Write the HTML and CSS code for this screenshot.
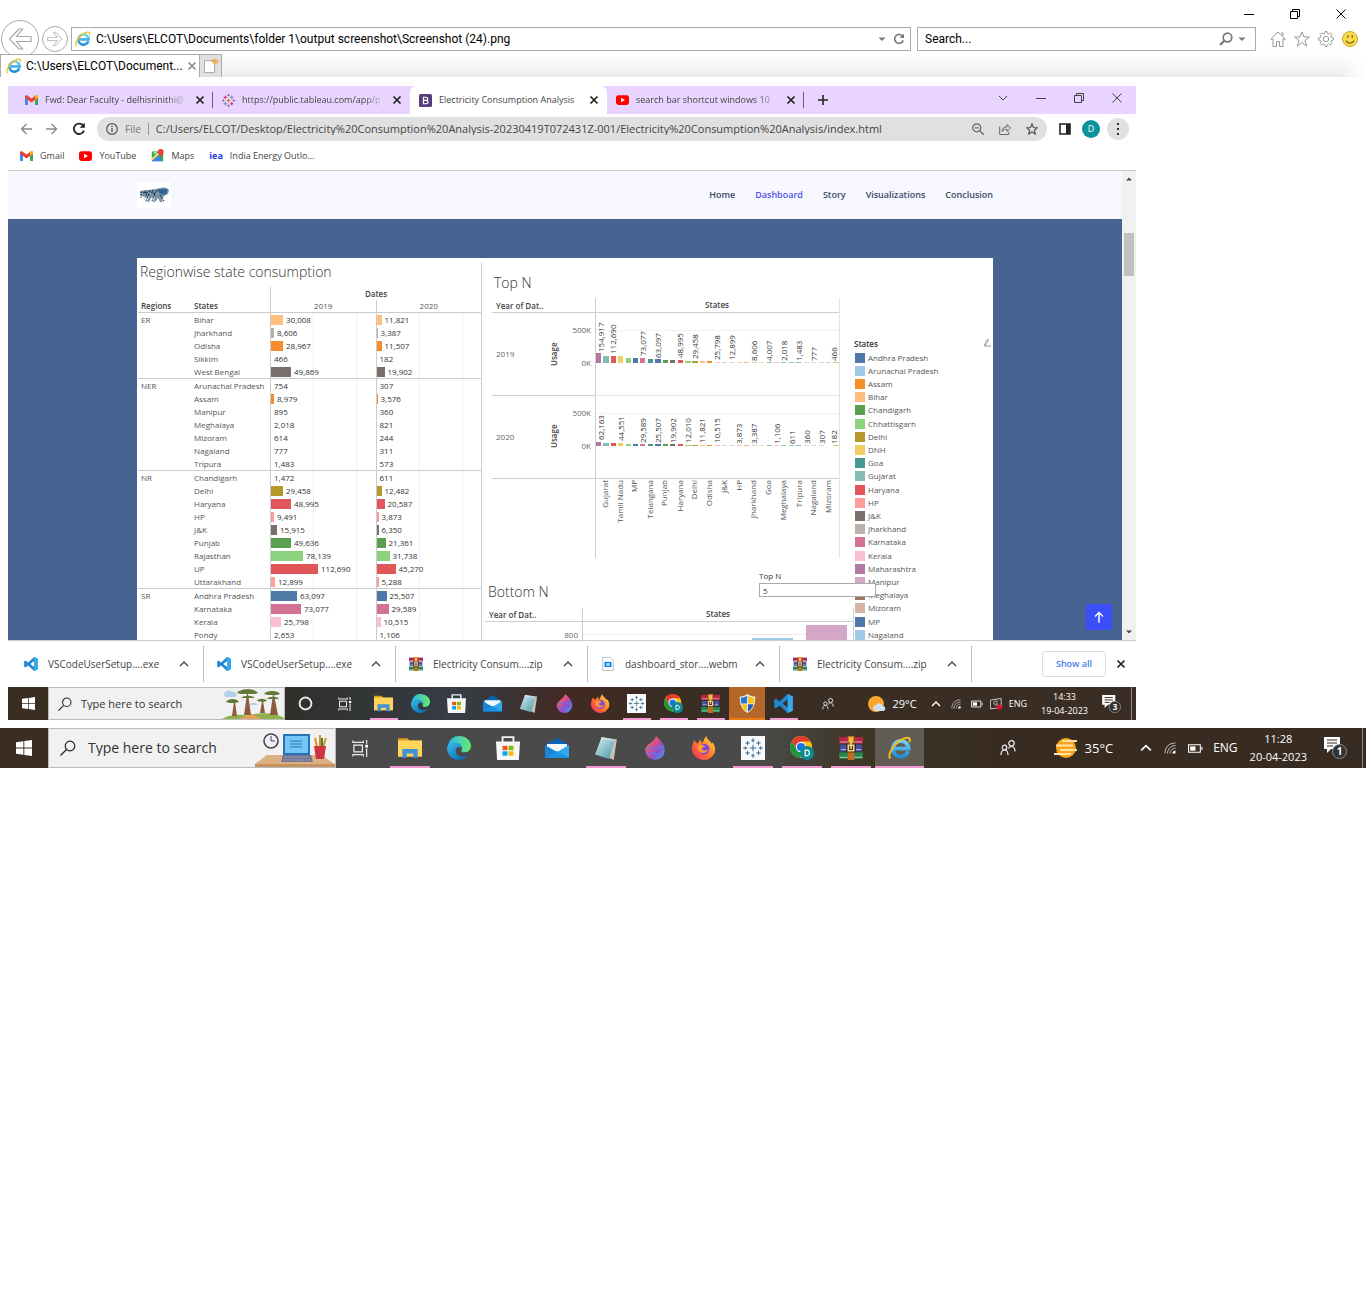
FILE: index.html
```html
<!DOCTYPE html>
<html lang="en">
<head>
<meta charset="utf-8">
<title>Screenshot (24).png</title>
<link rel="stylesheet" href="styles.css">
</head>
<body>
<svg class="defs" width="0" height="0" aria-hidden="true">
  <defs>
    <linearGradient id="gEdge" x1="0" y1="0" x2="1" y2="1"><stop offset="0" stop-color="#35c1f1"/><stop offset="1" stop-color="#0c59a4"/></linearGradient>
    <linearGradient id="gEdge2" x1="0" y1="0" x2="1" y2="0"><stop offset="0" stop-color="#2fb5e8"/><stop offset="1" stop-color="#66eb6e"/></linearGradient>
    <linearGradient id="gDrop" x1="0" y1="0" x2="1" y2="1"><stop offset="0" stop-color="#f5a623"/><stop offset=".35" stop-color="#e34f80"/><stop offset=".65" stop-color="#8c4fd0"/><stop offset="1" stop-color="#35b5f0"/></linearGradient>
    <linearGradient id="gFox" x1="1" y1="0" x2="0" y2="1"><stop offset="0" stop-color="#ffe14a"/><stop offset=".5" stop-color="#ff7a28"/><stop offset="1" stop-color="#f0256a"/></linearGradient>
    <linearGradient id="gPad" x1="0" y1="0" x2="1" y2="1"><stop offset="0" stop-color="#d9f0f3"/><stop offset="1" stop-color="#4795a5"/></linearGradient>
    <linearGradient id="gIe" x1="0" y1="0" x2="0" y2="1"><stop offset="0" stop-color="#6fd4fa"/><stop offset="1" stop-color="#1f8fd6"/></linearGradient>
  </defs>
  <symbol id="ie" viewBox="0 0 16 16"><path d="M13.4 10.3A5.2 5.2 0 1 1 13.7 8.4H4.5" fill="none" stroke="url(#gIe)" stroke-width="2.6"/><path d="M1.6 15C-.8 13 3.500 5.500 9 2.400c3.600-2 6.500-1.800 5.300 1.700" fill="none" stroke="#f2bd1d" stroke-width="1.300"/></symbol>
  <symbol id="gmail" viewBox="0 0 16 12"><path d="M0 1.500V12h3.600V4z" fill="#4285f4"/><path d="M16 1.500V12h-3.600V4z" fill="#34a853"/><path d="M0 1.600C0 .2 1.800-.4 2.900.4L8 4.300 13.100.4C14.200-.4 16 .2 16 1.600V3.200L8 9.100 0 3.200z" fill="#ea4335"/><path d="M12.400.9 13.100.4C14.200-.4 16 .2 16 1.600v1.600l-3.600 2.600z" fill="#fbbc04"/></symbol>
  <symbol id="youtube" viewBox="0 0 16 12"><rect width="16" height="12" rx="3" fill="#f00"/><path d="M6.300 3.200v5.600L11 6z" fill="#fff"/></symbol>
  <symbol id="tableau" viewBox="0 0 16 16"><path d="M8 5.500v5M5.500 8h5" stroke="#e8762d" stroke-width="1.300"/><path d="M4 2v4M2 4h4M12 10v4M10 12h4" stroke="#c72037" stroke-width="1.100"/><path d="M12 2v4M10 4h4M4 10v4M2 12h4" stroke="#5b879b" stroke-width="1.100"/><path d="M8 0v3M6.500 1.500h3M8 13v3M6.500 14.500h3M1.500 6.500v3M0 8h3M14.500 6.500v3M13 8h3" stroke="#5c6692"/></symbol>
  <symbol id="tile" viewBox="0 0 22 22"><path fill="#f8fafb" d="M0 0h22v22H0z"/><path d="M11 8v6M8 11h6M6 4.500v4M4 6.500h4M16 4.500v4M14 6.500h4M6 13.500v4M4 15.500h4M16 13.500v4M14 15.500h4M11 2v4M9.500 4h3M11 16v4M9.500 18h3M4 9.500v3M2 11h4M18 9.500v3M16 11h4" stroke="#38698a" stroke-width=".9"/></symbol>
  <symbol id="bootstrap" viewBox="0 0 16 16"><rect width="16" height="16" rx="2" fill="#563d7c"/><path d="M5.500 4h3.300a1.900 1.900 0 0 1 0 3.800H5.500zm0 3.800H9a2.100 2.100 0 0 1 0 4.200H5.500z" fill="none" stroke="#fff" stroke-width="1.500"/></symbol>
  <symbol id="maps" viewBox="0 0 16 16"><path fill="#34a853" d="M1 3h14v12H1z"/><path fill="#4285f4" d="M1 15 9 8l5 7z"/><path d="M1 13 12 3" stroke="#fdd663" stroke-width="2.500"/><path fill="#ea4335" d="M12 0a3.600 3.600 0 0 0-3.600 3.600C8.400 6 11 7 12 10c1-3 3.600-4 3.600-6.400A3.600 3.600 0 0 0 12 0z"/><path d="m3 5 3-1v3" stroke="#fff" fill="none"/></symbol>
  <symbol id="x" viewBox="0 0 10 10"><path d="m1.500 1.500 7 7m0-7-7 7" stroke="currentColor" stroke-width="1.700"/></symbol>
  <symbol id="thinx" viewBox="0 0 10 10"><path d="m.5.5 9 9m0-9-9 9" stroke="currentColor"/></symbol>
  <symbol id="restore" viewBox="0 0 10 10"><path d="M.5 2.500h7v7h-7zM2.500 2V.5h7v7H8" fill="none" stroke="currentColor"/></symbol>
  <symbol id="min" viewBox="0 0 10 10"><path d="M0 5.500h10" stroke="currentColor"/></symbol>
  <symbol id="up" viewBox="0 0 10 10"><path d="m1 7 4-4 4 4" fill="none" stroke="currentColor" stroke-width="1.400"/></symbol>
  <symbol id="down" viewBox="0 0 10 10"><path d="m1 3 4 4 4-4" fill="none" stroke="currentColor"/></symbol>
  <symbol id="caret" viewBox="0 0 8 8"><path d="M.5 2.500h7L4 6z" fill="currentColor"/></symbol>
  <symbol id="reload" viewBox="0 0 14 14"><path d="M11.500 4A5.200 5.200 0 1 0 12 8.600" fill="none" stroke="currentColor" stroke-width="1.800"/><path d="M12.800.8v5H7.600z" fill="currentColor"/></symbol>
  <symbol id="arrow" viewBox="0 0 12 12"><path d="M12 6H1.500m5-5-5 5 5 5" fill="none" stroke="currentColor" stroke-width="1.400"/></symbol>
  <symbol id="outarrow" viewBox="0 0 24 24"><path d="m11 2-9.500 10L11 22h3.500l-6-7.500H23v-5H8.500l6-7.500z" fill="none" stroke="currentColor" stroke-width="1.200"/></symbol>
  <symbol id="search" viewBox="0 0 16 16"><circle cx="10" cy="6" r="4.800" fill="none" stroke="currentColor" stroke-width="1.200"/><path d="m6.500 9.500-6 6" stroke="currentColor" stroke-width="1.200"/></symbol>
  <symbol id="lensbold" viewBox="0 0 14 14"><circle cx="8.500" cy="5.500" r="4.300" fill="none" stroke="currentColor" stroke-width="1.700"/><path d="M5.500 8.500 1 13" stroke="currentColor" stroke-width="2.200"/></symbol>
  <symbol id="vscode" viewBox="0 0 16 16"><path d="m11.500 0 4.300 2v12l-4.300 2L4.700 9.700 1.600 12 .2 11.200V4.800L1.600 4l3.100 2.300zM11.600 4.500 7.200 8l4.400 3.500z" fill="#1f8ad2" fill-rule="evenodd"/><path d="m11.500 0 4.300 2v12l-4.300 2z" fill="#39a9ee"/></symbol>
  <symbol id="rar" viewBox="0 0 22 22"><path fill="#b22344" d="M0 1h22v6H0z"/><path fill="#4650b0" d="M1 8h20v6H1z"/><path fill="#23854c" d="M0 15h22v6H0z"/><path stroke="#e8dfe8" stroke-width=".7" d="M1 5.500h20M2 12.500h18M1 19.500h20"/><path fill="#c06a1f" d="M8 0h6v22H8z"/><path fill="#f0c040" d="M9 1h4v5H9z"/><path fill="#3b2417" d="M6.500 7h9v8h-9z"/><path fill="none" stroke="#f4d590" stroke-width="1.500" d="M8.500 8.500h5v5h-5zM11 6v6"/></symbol>
  <symbol id="media" viewBox="0 0 14 16"><path d="M1 .5h9L13 4v11.500H1z" fill="#fff" stroke="#a9b8c6"/><path fill="#1683d8" d="M3 5.500h8v6H3z"/><path fill="#9fe3ff" d="M5 7h4v3H5z"/></symbol>
  <symbol id="win" viewBox="0 0 16 16"><path fill="#fff" d="M0 2.300 7.400 1.300v6.300H0zM8.300 1.100 16 0v7.600H8.300zM0 8.500h7.400v6.300L0 13.700zM8.300 8.500H16V16L8.300 14.900z"/></symbol>
  <symbol id="task" viewBox="0 0 18 18"><path d="M2 5.500h9v7H2zM1 .5v2h11v-2M1 17.500v-2h11v2M15.500 0v4M15.500 9v9" fill="none" stroke="#eee" stroke-width="1.300"/><path fill="#fff" d="M14 5h3v3h-3z"/></symbol>
  <symbol id="folder" viewBox="0 0 22 20"><path fill="#d99a13" d="M0 1h9l2 3H0z"/><path fill="#ffd45b" d="M0 3h22v15H0z"/><path fill="#3c92d4" d="M4 11h14v8h-4v-4H8v4H4z"/></symbol>
  <symbol id="edge" viewBox="0 0 22 22"><path d="M1 9C2 3 6 0 11 0c6.500 0 11 4.500 11 9 0 4-3 6-6 6-2 0-3.500-1-2.500-2.500 1-2 0-5-4-5C5 7.500 1.500 10 1 9z" fill="url(#gEdge2)"/><path d="M0 11c.5-4 4-5.500 8-5 4 .4 6 3.500 5 5.500-2-3-5.500-1-5 2.500.5 4 5 6 11 3.500C16.500 21 14 22 11 22 5 22 0 17 0 11z" fill="url(#gEdge)"/></symbol>
  <symbol id="store" viewBox="0 0 22 22"><path d="M6 6V1h10v5" fill="none" stroke="#f2f2f2" stroke-width="1.700"/><path fill="#f7f7f7" d="M0 5h22l-1 17H1z"/><path fill="#f25022" d="M6 9h4.500v4H6z"/><path fill="#7fba00" d="M11.500 9H16v4h-4.500z"/><path fill="#00a4ef" d="M6 14h4.500v4H6z"/><path fill="#ffb900" d="M11.500 14H16v4h-4.500z"/></symbol>
  <symbol id="mail" viewBox="0 0 24 20"><path fill="#0a62b3" d="m0 7 12-7 12 7v13H0z"/><path fill="#f3f8fc" d="M2 6h20v6l-10 5L2 12z"/><path fill="#1685d9" d="m0 7 12 7-12 6z"/><path fill="#31a9ef" d="m24 7-12 7 12 6z"/><path fill="#1b93e4" d="m0 20 12-7 12 7z"/></symbol>
  <symbol id="pad" viewBox="0 0 22 22"><path fill="#c9c2b4" d="m8 2 13 1-3 19-4-2z"/><path d="m7 1 12 2-5 18L1 17z" fill="url(#gPad)"/><path d="m7 2 11 2" stroke="#e8e8e8" stroke-width="2" stroke-dasharray="1 1"/></symbol>
  <symbol id="drop" viewBox="0 0 18 22"><path d="M10 0c4 4 8 8 8 13a9 9 0 0 1-18 0C0 8 8 6 10 0z" fill="url(#gDrop)"/><path d="M1 12c5-5 10 3 16-3M1 16c5-4 10 4 15 0" stroke="#5e7be8" stroke-width="2" fill="none" opacity=".6"/></symbol>
  <symbol id="fox" viewBox="0 0 22 22"><path d="M2 4l3 3 3-4 1 4c2-2 2-5 4-7 1 4 4 4 5 7l1-1c2 3 3 6 1.500 10C18 20 15 22 11 22 5 22 0 17.500 0 12 0 9 1 6 2 4z" fill="url(#gFox)"/><circle cx="11" cy="12" r="5" fill="#7d46d6"/><path d="M5 9c3-2 6-1 7 1-2 0-3 1-3 2 1 2 4 2 6 0-1 5-9 5-10-1z" fill="#ff9a2e"/></symbol>
  <symbol id="chrome" viewBox="0 0 24 24"><circle cx="11" cy="11" r="11" fill="#fbc116"/><path d="M1.500 5.500A11 11 0 0 1 20.500 5.500H11L7 13z" fill="#e33b2e"/><path d="M1.500 5.500A11 11 0 0 0 10 22l5-8.500H7z" fill="#229342"/><circle cx="11" cy="11" r="5.200" fill="#fff"/><circle cx="11" cy="11" r="4.100" fill="#1a73e8"/><circle cx="17" cy="17" r="7" fill="#0b8a94"/><path d="M15.200 14.200h1.300c4 0 4 5.600 0 5.600h-1.300z" fill="none" stroke="#fff" stroke-width="1.200"/></symbol>
  <symbol id="shield" viewBox="0 0 18 22"><path d="M9 0c3 2 6 3 9 3 0 9-2 15-9 19C2 18 0 12 0 3c3 0 6-1 9-3z" fill="#f2f2f2"/><path fill="#2b74d6" d="M8.500 2v9H2C1.300 9 1.200 7 1.200 4.300 4 4 6.500 3.300 8.500 2z"/><path fill="#f8c21c" d="M9.500 2c2 1.300 4.500 2 7.300 2.300 0 2.700-.1 4.700-.8 6.700H9.500zM8.500 12v8.500C5 18.500 3 15.500 2.200 12z"/><path fill="#1f5fba" d="M9.500 12v8.500c3.500-2 5.500-5 6.300-8.500z"/></symbol>
  <symbol id="people" viewBox="0 0 16 16"><path d="M1 15c0-3.500 1.500-5 3.500-5S8 11.500 8 15M8.500 8.500C9 7 10 6.500 11.500 6.500c2 0 3.500 1.500 3.500 5" fill="none" stroke="#eee" stroke-width="1.200"/><circle cx="4.500" cy="7.500" r="2.300" fill="none" stroke="#eee" stroke-width="1.200"/><circle cx="11.500" cy="3.300" r="2.700" fill="none" stroke="#eee" stroke-width="1.200"/></symbol>
  <symbol id="suncloud" viewBox="0 0 18 18"><circle cx="8" cy="9" r="8" fill="#fba52a"/><path d="M8 16a3 3 0 0 1 0-6 3.500 3.500 0 0 1 6.500 1A2.500 2.500 0 0 1 15 16z" fill="#cfe0f5"/></symbol>
  <symbol id="haze" viewBox="0 0 24 22"><circle cx="12" cy="11" r="10" fill="#f8a51b"/><path d="M8 4h15M2 8.500h17M6 13h17M0 17h17" stroke="#ffe3a6" stroke-width="2"/></symbol>
  <symbol id="wifi" viewBox="0 0 12 12"><path d="M1 11.500C1 5 5 1 11.500 1M3.500 11.500C3.500 7 7 3.500 11.500 3.500M6 11.500C6 8.500 8.500 6 11.500 6" fill="none" stroke="#ccc" stroke-width=".9"/><path d="M8.500 11.500a3 3 0 0 1 3-3v3z" fill="#fff"/></symbol>
  <symbol id="battery" viewBox="0 0 14 10"><path d="M.5 1.500h11v7H.5zM13 3.500v3" fill="none" stroke="#fff"/><path fill="#fff" d="M2 3h5v4H2z"/></symbol>
  <symbol id="rec" viewBox="0 0 14 14"><path d="m.5 2.500 12.500-2v11l-12.500 1z" fill="none" stroke="#ddd"/><path d="M9 4C5 2 3 6 6 8s4-3 1-2" fill="none" stroke="#ddd"/><circle cx="11" cy="10.500" r="3" fill="#e8112d"/></symbol>
  <symbol id="note" viewBox="0 0 24 22"><path d="M0 0h16v12H7l-4 4v-4H0z" fill="#fff"/><path d="M3 3h10M3 6h10M3 9h6" stroke="#392c22" stroke-width="1.200"/><circle cx="15.500" cy="14.500" r="7" fill="#333" stroke="#999" stroke-width=".9"/></symbol>
</svg>

<header class="ie">
  <div class="ie-title">
    <button aria-label="Minimize"><svg><use href="#min"/></svg></button>
    <button aria-label="Restore"><svg><use href="#restore"/></svg></button>
    <button aria-label="Close"><svg><use href="#thinx"/></svg></button>
  </div>
  <div class="ie-nav">
    <button class="round big" aria-label="Back"><svg><use href="#outarrow"/></svg></button>
    <button class="round" aria-label="Forward"><svg class="flip"><use href="#outarrow"/></svg></button>
    <div class="field address">
      <svg class="i16"><use href="#ie"/></svg>
      <input type="text" aria-label="Address" value="C:\Users\ELCOT\Documents\folder 1\output screenshot\Screenshot (24).png">
      <svg class="i8"><use href="#caret"/></svg>
      <svg class="i12"><use href="#reload"/></svg>
    </div>
    <div class="field find">
      <input type="text" aria-label="Search" value="Search...">
      <svg class="i14"><use href="#lensbold"/></svg>
      <svg class="i8"><use href="#caret"/></svg>
    </div>
    <div class="ie-tools">
      <button aria-label="Home"><svg viewBox="0 0 16 16"><path d="M.7 8 8 1l7.300 7-1 1-1.300-1.200V15.500H9.500v-5h-3v5H3V7.800L1.700 9zM11 2h2v3" fill="none" stroke="currentColor"/></svg></button>
      <button aria-label="Favorites"><svg viewBox="0 0 16 16"><path d="m8 .8 2 5.200h5.500L11 9.400l1.700 5.700L8 11.700l-4.700 3.400L5 9.400.5 6H6z" fill="none" stroke="currentColor"/></svg></button>
      <button aria-label="Settings"><svg viewBox="0 0 16 16"><circle cx="8" cy="8" r="2.700" fill="none" stroke="currentColor"/><path d="M6.500 2.500 7 .6h2l.5 1.900 1.200.5 1.700-1 1.500 1.500-1 1.700.6 1.300 1.900.5v2l-1.900.5-.6 1.200 1 1.700-1.500 1.500-1.700-1-1.200.6L9 15.400H7l-.5-1.900-1.200-.6-1.700 1-1.500-1.500 1-1.700-.6-1.200L.6 9V7l1.900-.5.6-1.300-1-1.700L3.600 2l1.700 1z" fill="none" stroke="currentColor"/></svg></button>
      <button aria-label="Feedback"><svg viewBox="0 0 16 16"><circle cx="8" cy="8" r="7.500" fill="#fbd949" stroke="#c9a72e"/><path d="M5.800 4v3M10.200 4v3M4 9.500c1.500 3.500 6.500 3.500 8 0" fill="none" stroke="#7a6420" stroke-width="1.200"/></svg></button>
    </div>
  </div>
  <div class="ie-tabs">
    <button class="ie-tab"><svg class="i16"><use href="#ie"/></svg><span>C:\Users\ELCOT\Document...</span><svg class="i10 grey"><use href="#x"/></svg></button>
    <button class="ie-new" aria-label="New tab"><svg viewBox="0 0 16 16"><path d="M1.500 2.500h10v12h-10z" fill="#fff" stroke="#aaa"/><path d="M12 0v7M8.500 3.500h7M9.500 1l5 5m0-5-5 5" stroke="#f0a52c"/></svg></button>
  </div>
</header>

<main class="photo">
  <div class="tabstrip">
    <button class="tab fade"><svg class="ico wide"><use href="#gmail"/></svg><span>Fwd: Dear Faculty - delhisrinithi@</span><svg class="i10"><use href="#x"/></svg></button>
    <button class="tab fade"><svg class="ico"><use href="#tableau"/></svg><span>https://public.tableau.com/app/p</span><svg class="i10"><use href="#x"/></svg></button>
    <button class="tab active"><svg class="ico"><use href="#bootstrap"/></svg><span>Electricity Consumption Analysis</span><svg class="i10"><use href="#x"/></svg></button>
    <button class="tab fade"><svg class="ico wide"><use href="#youtube"/></svg><span>search bar shortcut windows 10</span><svg class="i10"><use href="#x"/></svg></button>
    <button class="plus" aria-label="New tab"><svg viewBox="0 0 10 10"><path d="M5 0v10M0 5h10" stroke="currentColor" stroke-width="1.600"/></svg></button>
    <div class="wincontrols">
      <button aria-label="Tab search"><svg><use href="#down"/></svg></button>
      <button aria-label="Minimize"><svg><use href="#min"/></svg></button>
      <button aria-label="Restore"><svg><use href="#restore"/></svg></button>
      <button aria-label="Close"><svg><use href="#thinx"/></svg></button>
    </div>
  </div>
  <div class="toolbar">
    <button class="nav grey" aria-label="Back"><svg class="i12"><use href="#arrow"/></svg></button>
    <button class="nav grey" aria-label="Forward"><svg class="i12 flip"><use href="#arrow"/></svg></button>
    <button class="nav" aria-label="Reload"><svg class="i14"><use href="#reload"/></svg></button>
    <div class="omnibox">
      <svg class="i12" viewBox="0 0 12 12"><circle cx="6" cy="6" r="5.300" fill="none" stroke="#555" stroke-width="1.200"/><path d="M6 5v4M6 2.700v1.300" stroke="#555" stroke-width="1.300"/></svg>
      <span class="scheme">File</span>
      <input type="text" aria-label="URL" value="C:/Users/ELCOT/Desktop/Electricity%20Consumption%20Analysis-20230419T072431Z-001/Electricity%20Consumption%20Analysis/index.html">
      <div class="omni-actions">
        <svg viewBox="0 0 12 12"><circle cx="4.800" cy="4.800" r="4" fill="none" stroke="#666" stroke-width="1.200"/><path d="m7.800 7.800 4 4M3 4.800h3.600" stroke="#666" stroke-width="1.300"/></svg>
        <svg viewBox="0 0 12 12"><path d="M.7 3.500v8h9V9M3 8.500c.2-3 2-4.700 5-4.700V1.500l3.500 3.700L8 8.500V6.300C5.500 6.200 4 7 3 8.500z" fill="none" stroke="#666"/></svg>
        <svg viewBox="0 0 12 12"><path d="m6 1 1.500 3.500 3.800.3L8.500 7.300l.8 3.700L6 9l-3.300 2 .8-3.700L.7 4.800l3.800-.3z" fill="none" stroke="#555" stroke-width="1.200"/></svg>
      </div>
    </div>
    <button class="side" aria-label="Side panel"><svg viewBox="0 0 12 12"><path d="M1 1h10v10H1z" fill="none" stroke="#222" stroke-width="1.600"/><path fill="#222" d="M7 1h4v10H7z"/></svg></button>
    <button class="avatar">D</button>
    <button class="menu" aria-label="Menu"><svg viewBox="0 0 12 12"><path fill="#333" d="M5 0h2v2H5zM5 5h2v2H5zM5 10h2v2H5z"/></svg></button>
  </div>
  <div class="bookmarks">
    <a href="#"><svg class="ico wide"><use href="#gmail"/></svg>Gmail</a>
    <a href="#"><svg class="ico wide"><use href="#youtube"/></svg>YouTube</a>
    <a href="#"><svg class="ico"><use href="#maps"/></svg>Maps</a>
    <a href="#"><b>iea</b>India Energy Outlo...</a>
  </div>

  <div class="viewport">
    <div class="site">
      <nav class="sitenav">
        <div class="container">
          <a class="logo" href="#" aria-label="Make in India"><svg viewBox="0 0 34 26"><path fill="#fff" d="M0 0h34v26H0z"/><path d="M3 10c2-2 5-2 9-2l6-1 6-1c3-1 7 0 8 2l-1 4-4 2-2 4 1 2h-3l-2-4-3 4-2 0 2-5-4 1-2 4h-2l2-5-4 1-2 4H6l2-5-4-1z" fill="#7893ab"/><path d="M3 10l6 1 4-2 4 3 4-4 4 3 5-3M12 12l-3 7M18 12l-3 7M23 13l4 6M4 12v4M15 8l3 4M8 9l2 5" stroke="#26394f" fill="none" stroke-width="1.100" stroke-dasharray="2 1"/><path d="M22 7h8v4l-3 2-5-2z" fill="#1f5c98" opacity=".75"/></svg></a>
          <a href="#">Home</a><a class="on" href="#">Dashboard</a><a href="#">Story</a><a href="#">Visualizations</a><a href="#">Conclusion</a>
        </div>
      </nav>
      <section class="container dashboard">
        <div class="regions">
          <h2>Regionwise state consumption</h2>
          <table>
            <colgroup><col class="c-region"><col class="c-state"><col><col></colgroup>
            <thead>
              <tr><td colspan="2"></td><th colspan="2" class="dates">Dates</th></tr>
              <tr><th>Regions</th><th>States</th><td class="yr">2019</td><td class="yr">2020</td></tr>
            </thead>
            <tbody>
              <tr><td>ER</td><td>Bihar</td><td><i class="bihar" style="width:12px"></i>30,008</td><td><i class="bihar" style="width:5px"></i>11,821</td></tr>
              <tr><td></td><td>Jharkhand</td><td><i class="jharkhand" style="width:3px"></i>8,606</td><td><i class="jharkhand" style="width:1px"></i>3,387</td></tr>
              <tr><td></td><td>Odisha</td><td><i class="assam" style="width:12px"></i>28,967</td><td><i class="assam" style="width:5px"></i>11,507</td></tr>
              <tr><td></td><td>Sikkim</td><td><i></i>466</td><td><i></i>182</td></tr>
              <tr><td></td><td>West Bengal</td><td><i class="jk" style="width:20px"></i>49,869</td><td><i class="jk" style="width:8px"></i>19,902</td></tr>
            </tbody>
            <tbody>
              <tr><td>NER</td><td>Arunachal Pradesh</td><td><i></i>754</td><td><i></i>307</td></tr>
              <tr><td></td><td>Assam</td><td><i class="assam" style="width:3px"></i>8,979</td><td><i class="assam" style="width:1px"></i>3,576</td></tr>
              <tr><td></td><td>Manipur</td><td><i></i>895</td><td><i></i>360</td></tr>
              <tr><td></td><td>Meghalaya</td><td><i></i>2,018</td><td><i></i>821</td></tr>
              <tr><td></td><td>Mizoram</td><td><i></i>614</td><td><i></i>244</td></tr>
              <tr><td></td><td>Nagaland</td><td><i></i>777</td><td><i></i>311</td></tr>
              <tr><td></td><td>Tripura</td><td><i></i>1,483</td><td><i></i>573</td></tr>
            </tbody>
            <tbody>
              <tr><td>NR</td><td>Chandigarh</td><td><i></i>1,472</td><td><i></i>611</td></tr>
              <tr><td></td><td>Delhi</td><td><i class="delhi" style="width:12px"></i>29,458</td><td><i class="delhi" style="width:5px"></i>12,482</td></tr>
              <tr><td></td><td>Haryana</td><td><i class="haryana" style="width:20px"></i>48,995</td><td><i class="haryana" style="width:8px"></i>20,587</td></tr>
              <tr><td></td><td>HP</td><td><i class="hp" style="width:3px"></i>9,491</td><td><i class="hp" style="width:2px"></i>3,873</td></tr>
              <tr><td></td><td>J&amp;K</td><td><i class="jk" style="width:6px"></i>15,915</td><td><i class="jk" style="width:2px"></i>6,350</td></tr>
              <tr><td></td><td>Punjab</td><td><i class="chandigarh" style="width:20px"></i>49,636</td><td><i class="chandigarh" style="width:9px"></i>21,361</td></tr>
              <tr><td></td><td>Rajasthan</td><td><i class="chhattisgarh" style="width:32px"></i>78,139</td><td><i class="chhattisgarh" style="width:13px"></i>31,738</td></tr>
              <tr><td></td><td>UP</td><td><i class="haryana" style="width:47px"></i>112,690</td><td><i class="haryana" style="width:19px"></i>45,270</td></tr>
              <tr><td></td><td>Uttarakhand</td><td><i class="hp" style="width:4px"></i>12,899</td><td><i class="hp" style="width:2px"></i>5,288</td></tr>
            </tbody>
            <tbody>
              <tr><td>SR</td><td>Andhra Pradesh</td><td><i class="ap" style="width:26px"></i>63,097</td><td><i class="ap" style="width:10px"></i>25,507</td></tr>
              <tr><td></td><td>Karnataka</td><td><i class="karnataka" style="width:30px"></i>73,077</td><td><i class="karnataka" style="width:12px"></i>29,589</td></tr>
              <tr><td></td><td>Kerala</td><td><i class="kerala" style="width:10px"></i>25,798</td><td><i class="kerala" style="width:4px"></i>10,515</td></tr>
              <tr><td></td><td>Pondy</td><td><i></i>2,653</td><td><i></i>1,106</td></tr>
            </tbody>
          </table>
        </div>
        <div class="charts">
          <h2>Top N</h2>
          <svg class="topn" viewBox="0 0 349 260">
            <g stroke="#f1f1f1"><path d="M103 32.500h245M103 115.500h245"/></g>
            <g stroke="#cdcdcd" fill="none"><path d="M0 14.500h348M0 97.500h103M0 180.500h348M103.500 0v260"/><path stroke="#e3e3e3" d="M103 97.500h245M347.500 0v260"/></g>
            <g font-weight="600" fill="#444"><text x="4" y="11">Year of Dat..</text><text x="225" y="10" text-anchor="middle">States</text><text transform="translate(65 68) rotate(-90)">Usage</text><text transform="translate(65 150) rotate(-90)">Usage</text></g>
            <g fill="#666"><text x="4" y="59">2019</text><text x="4" y="142">2020</text><g text-anchor="end"><text x="99" y="35">500K</text><text x="99" y="68">0K</text><text x="99" y="118">500K</text><text x="99" y="151">0K</text></g></g>
            <path fill="#b07aa1" d="M104 55h5v10h-5zM104 144h5v4h-5z"/><path fill="#86bcb6" d="M111 58h6v7h-6zM111 145h6v3h-6z"/><path fill="#e15759" d="M119 58h5v7h-5zM119 145h5v3h-5zM186 62h5v3h-5zM186 146h5v2h-5z"/><path fill="#f1ce63" d="M126 58h5v7h-5zM126 145h5v3h-5z"/><path fill="#8cd17d" d="M134 60h5v5h-5zM134 146h5v2h-5zM193 63h6v2h-6zM193 147h6v1h-6z"/><path fill="#4e79a7" d="M141 60h5v5h-5zM141 146h5v2h-5zM163 61h6v4h-6zM163 146h6v2h-6z"/><path fill="#d37295" d="M148 60h5v5h-5zM148 146h5v2h-5z"/><path fill="#499894" d="M156 61h5v4h-5zM156 146h5v2h-5z"/><path fill="#59a14f" d="M171 62h5v3h-5zM171 146h5v2h-5z"/><path fill="#79706e" d="M178 62h5v3h-5zM178 146h5v2h-5z"/><path fill="#b6992d" d="M200 63h6v2h-6zM200 147h6v1h-6z"/><path fill="#ffbe7d" d="M208 63h5v2h-5zM208 147h5v1h-5z"/><path fill="#f28e2b" d="M215 63h5v2h-5zM215 147h5v1h-5z"/><path fill="#fabfd2" d="M223 64h5v1h-5zM223 147h5v1h-5z"/>
            <g fill="none" opacity=".6"><path stroke="#bab0ac" d="M230 64.500h5M260 64.500h5M230 147.500h5M260 147.500h5M334 64.500h5"/><path stroke="#ff9d9a" d="M237 64.500h5M245 64.500h5M237 147.500h5M245 147.500h5M282 64.500h5M282 147.500h5"/><path stroke="#f28e2b" d="M252 64.500h5M252 147.500h5"/><path stroke="#f1ce63" d="M267 64.500h5M267 147.500h5"/><path stroke="#499894" d="M275 64.500h5M275 147.500h5M304 64.500h5M304 147.500h5"/><path stroke="#59a14f" d="M297 64.500h5M297 147.500h5M289 64.500h5M289 147.500h5"/><path stroke="#a0cbe8" d="M312 64.500h5M319 64.500h5M327 64.500h5M312 147.500h5M319 147.500h5M327 147.500h5"/><path stroke="#b6992d" d="M341 64.500h6M341 147.500h6"/></g>
            <g fill="#333">
              <text transform="translate(112 54) rotate(-90)">154,917</text><text transform="translate(124 56) rotate(-90)">112,690</text><text transform="translate(154 58) rotate(-90)">73,077</text><text transform="translate(169 60) rotate(-90)">63,097</text><text transform="translate(191 60) rotate(-90)">48,995</text><text transform="translate(206 61) rotate(-90)">29,458</text><text transform="translate(228 62) rotate(-90)">25,798</text><text transform="translate(243 62) rotate(-90)">12,899</text><text transform="translate(265 63) rotate(-90)">8,606</text><text transform="translate(280 63) rotate(-90)">4,007</text><text transform="translate(295 63) rotate(-90)">2,018</text><text transform="translate(310 63) rotate(-90)">1,483</text><text transform="translate(325 63) rotate(-90)">777</text><text transform="translate(345 63) rotate(-90)">466</text>
              <text transform="translate(112 142) rotate(-90)">62,163</text><text transform="translate(132 143) rotate(-90)">44,551</text><text transform="translate(154 145) rotate(-90)">29,589</text><text transform="translate(169 145) rotate(-90)">25,507</text><text transform="translate(184 145) rotate(-90)">19,902</text><text transform="translate(199 145) rotate(-90)">12,010</text><text transform="translate(213 145) rotate(-90)">11,821</text><text transform="translate(228 145) rotate(-90)">10,515</text><text transform="translate(250 146) rotate(-90)">3,873</text><text transform="translate(265 146) rotate(-90)">3,387</text><text transform="translate(288 146) rotate(-90)">1,106</text><text transform="translate(303 146) rotate(-90)">611</text><text transform="translate(318 146) rotate(-90)">360</text><text transform="translate(333 146) rotate(-90)">307</text><text transform="translate(345 146) rotate(-90)">182</text>
            </g>
            <g fill="#555" text-anchor="end">
              <text transform="translate(116 182) rotate(-90)">Gujarat</text><text transform="translate(131 182) rotate(-90)">Tamil Nadu</text><text transform="translate(145 182) rotate(-90)">MP</text><text transform="translate(161 182) rotate(-90)">Telangana</text><text transform="translate(175 182) rotate(-90)">Punjab</text><text transform="translate(191 182) rotate(-90)">Haryana</text><text transform="translate(205 182) rotate(-90)">Delhi</text><text transform="translate(220 182) rotate(-90)">Odisha</text><text transform="translate(235 182) rotate(-90)">J&amp;K</text><text transform="translate(250 182) rotate(-90)">HP</text><text transform="translate(264 182) rotate(-90)">Jharkhand</text><text transform="translate(279 182) rotate(-90)">Goa</text><text transform="translate(294 182) rotate(-90)">Meghalaya</text><text transform="translate(310 182) rotate(-90)">Tripura</text><text transform="translate(324 182) rotate(-90)">Nagaland</text><text transform="translate(339 182) rotate(-90)">Mizoram</text>
            </g>
          </svg>
          <label class="param">Top N<input type="text" value="5"></label>
          <h2 class="second">Bottom N</h2>
          <svg class="bottomn" viewBox="0 0 369 60">
            <path d="M98 26.500h270" stroke="#eee"/>
            <path d="M0 13.500h369M97.500 0v60M368.500 0v60" stroke="#cdcdcd"/>
            <g font-weight="600" fill="#444"><text x="4" y="10">Year of Dat..</text><text x="233" y="9" text-anchor="middle">States</text></g>
            <text x="93" y="30" text-anchor="end" fill="#666">800</text>
            <path fill="#a0cbe8" d="M267 30h41v30h-41z"/><path fill="#d4a6c8" d="M321 17h41v43h-41z"/>
          </svg>
        </div>
        <aside class="legend">
          <h3>States <svg viewBox="0 0 8 8"><path d="M1 7h7M1 6c4-2 5-6 4-5.500S2 3 2.500 6" fill="none" stroke="#777" stroke-width=".8"/></svg></h3>
          <ul>
            <li><i class="ap"></i>Andhra Pradesh</li><li><i class="arunachal"></i>Arunachal Pradesh</li><li><i class="assam"></i>Assam</li><li><i class="bihar"></i>Bihar</li><li><i class="chandigarh"></i>Chandigarh</li><li><i class="chhattisgarh"></i>Chhattisgarh</li><li><i class="delhi"></i>Delhi</li><li><i class="dnh"></i>DNH</li><li><i class="goa"></i>Goa</li><li><i class="gujarat"></i>Gujarat</li><li><i class="haryana"></i>Haryana</li><li><i class="hp"></i>HP</li><li><i class="jk"></i>J&amp;K</li><li><i class="jharkhand"></i>Jharkhand</li><li><i class="karnataka"></i>Karnataka</li><li><i class="kerala"></i>Kerala</li><li><i class="maharashtra"></i>Maharashtra</li><li><i class="manipur"></i>Manipur</li><li><i class="meghalaya"></i>Meghalaya</li><li><i class="mizoram"></i>Mizoram</li><li><i class="ap"></i>MP</li><li><i class="arunachal"></i>Nagaland</li>
          </ul>
        </aside>
      </section>
      <a class="totop" href="#" aria-label="Back to top"><svg viewBox="0 0 12 12"><path d="M6 11.500V1.500M2 5.500l4-4 4 4" fill="none" stroke="#fff" stroke-width="1.500"/></svg></a>
    </div>
    <div class="scrollbar"><svg viewBox="0 0 8 8"><path d="M1 5.500h6L4 2.500z" fill="#444"/></svg><span class="thumb"></span><svg viewBox="0 0 8 8"><path d="M1 2.500h6L4 5.500z" fill="#444"/></svg></div>
  </div>

  <div class="downloads">
    <button class="dl"><svg><use href="#vscode"/></svg><span>VSCodeUserSetup....exe</span><svg class="i10"><use href="#up"/></svg></button>
    <button class="dl"><svg><use href="#vscode"/></svg><span>VSCodeUserSetup....exe</span><svg class="i10"><use href="#up"/></svg></button>
    <button class="dl"><svg><use href="#rar"/></svg><span>Electricity Consum....zip</span><svg class="i10"><use href="#up"/></svg></button>
    <button class="dl"><svg><use href="#media"/></svg><span>dashboard_stor....webm</span><svg class="i10"><use href="#up"/></svg></button>
    <button class="dl"><svg><use href="#rar"/></svg><span>Electricity Consum....zip</span><svg class="i10"><use href="#up"/></svg></button>
    <button class="showall">Show all</button>
    <button class="dl-close" aria-label="Close"><svg class="i10"><use href="#x"/></svg></button>
  </div>

  <div class="taskbar small">
    <button class="start" aria-label="Start"><svg><use href="#win"/></svg></button>
    <div class="search">
      <svg class="lens"><use href="#search"/></svg><input type="text" aria-label="Search" value="Type here to search">
      <svg class="art" viewBox="0 0 62 31"><path d="M2 7c0-4 5-6 8-3 4-1 6 3 3 5H4zM28 17c0-3 7-3 8 0z" fill="#b3cfe6"/><path d="M0 31c8-5 18-5 26-3 8-4 28-4 36 2v1z" fill="#8fb04b"/><path d="M16 31c8-2 10-5 12-5 3 0 6 2 12 5z" fill="#e5a05a"/><path d="m22 27 3-21h1l3 21zM48 27l3-20h1l4 20zM10 28l2-14h1l2 14zM38 25l2-12h1l2 12z" fill="#8a5a3c"/><path d="M15 5c3-5 18-5 21 0l-3 1-14 0zM42 6c2-4 14-4 16 0l-3 1h-9zM19 10c3-3 11-3 14 0zM4 14c2-4 11-4 13 0l-4 1H8zM35 13c1-3 8-3 10 0l-4 1zM45 11c2-3 10-3 12 0z" fill="#5e7a35"/></svg>
    </div>
    <button class="app wide" aria-label="Cortana"><svg viewBox="0 0 16 16"><circle cx="8" cy="8" r="5" fill="none" stroke="#eee" stroke-width="1.600"/></svg></button>
    <button class="app wide" aria-label="Task view"><svg><use href="#task"/></svg></button>
    <button class="app open" aria-label="Explorer"><svg><use href="#folder"/></svg></button>
    <button class="app" aria-label="Edge"><svg><use href="#edge"/></svg></button>
    <button class="app" aria-label="Store"><svg><use href="#store"/></svg></button>
    <button class="app" aria-label="Mail"><svg><use href="#mail"/></svg></button>
    <button class="app" aria-label="Notepad"><svg><use href="#pad"/></svg></button>
    <button class="app" aria-label="Paint 3D"><svg><use href="#drop"/></svg></button>
    <button class="app" aria-label="Firefox"><svg><use href="#fox"/></svg></button>
    <button class="app open" aria-label="Tableau"><svg><use href="#tile"/></svg></button>
    <button class="app open" aria-label="Chrome"><svg><use href="#chrome"/></svg></button>
    <button class="app open" aria-label="WinRAR"><svg><use href="#rar"/></svg></button>
    <button class="app alert" aria-label="Setup"><svg><use href="#shield"/></svg></button>
    <button class="app open" aria-label="VS Code"><svg><use href="#vscode"/></svg></button>
    <div class="tray">
      <svg class="people"><use href="#people"/></svg>
      <span class="weather"><svg><use href="#suncloud"/></svg>29°C</span>
      <svg class="tri"><use href="#up"/></svg><svg class="tri"><use href="#wifi"/></svg><svg class="bat"><use href="#battery"/></svg><svg class="bat"><use href="#rec"/></svg>
      <span>ENG</span>
      <time>14:33<br>19-04-2023</time>
      <span class="notes"><svg><use href="#note"/></svg><b>3</b></span>
    </div>
  </div>
</main>

<footer class="taskbar">
  <button class="start" aria-label="Start"><svg><use href="#win"/></svg></button>
  <div class="search">
    <svg class="lens"><use href="#search"/></svg><input type="text" aria-label="Search" value="Type here to search">
    <svg class="art" viewBox="0 0 80 38"><path d="M0 38v-3l12-9h54l14 9v3z" fill="#dcb083"/><path d="M0 35h80v3H0z" fill="#c6935f"/><circle cx="16" cy="12" r="7" fill="#f1f1f5" stroke="#474357" stroke-width="1.600"/><path d="M16 7v5h4" fill="none" stroke="#474357"/><path fill="#2674b8" d="M28 5h27v21H28z"/><path fill="#74c7f4" d="M30 7h23v17H30z"/><path d="M35 12h12M35 15h12M35 18h12" stroke="#2674b8"/><path fill="#737591" d="M28 26h28l2 7H26z"/><path d="M30 28h24M29 31h26" stroke="#a9abc2" stroke-dasharray="2 1"/><path d="m62 18-2-9M65 18V6M68 18l3-9" stroke="#d4941d" stroke-width="2"/><path d="M67 18V9" stroke="#3c7d4b" stroke-width="2"/><path fill="#cf3340" d="M59 17h12l-2 13h-8z"/></svg>
  </div>
  <button class="app" aria-label="Task view"><svg><use href="#task"/></svg></button>
  <button class="app open" aria-label="Explorer"><svg><use href="#folder"/></svg></button>
  <button class="app" aria-label="Edge"><svg><use href="#edge"/></svg></button>
  <button class="app" aria-label="Store"><svg><use href="#store"/></svg></button>
  <button class="app" aria-label="Mail"><svg><use href="#mail"/></svg></button>
  <button class="app open" aria-label="Notepad"><svg><use href="#pad"/></svg></button>
  <button class="app" aria-label="Paint 3D"><svg><use href="#drop"/></svg></button>
  <button class="app" aria-label="Firefox"><svg><use href="#fox"/></svg></button>
  <button class="app open" aria-label="Tableau"><svg><use href="#tile"/></svg></button>
  <button class="app open" aria-label="Chrome"><svg><use href="#chrome"/></svg></button>
  <button class="app open" aria-label="WinRAR"><svg><use href="#rar"/></svg></button>
  <button class="app open current" aria-label="Internet Explorer"><svg><use href="#ie"/></svg></button>
  <div class="tray">
    <svg class="people"><use href="#people"/></svg>
    <span class="weather"><svg><use href="#haze"/></svg>35°C</span>
    <svg class="tri"><use href="#up"/></svg><svg class="tri"><use href="#wifi"/></svg><svg class="bat"><use href="#battery"/></svg>
    <span>ENG</span>
    <time>11:28<br>20-04-2023</time>
    <span class="notes"><svg><use href="#note"/></svg><b>1</b></span>
  </div>
</footer>
</body>
</html>
```
FILE: styles.css
```css
* { box-sizing: border-box; }
body { margin: 0; background: #fff; font: 12px/16px "Open Sans", "Noto Sans", sans-serif; color: #000; }
button { border: 0; padding: 0; margin: 0; background: none; font: inherit; color: inherit; display: flex; align-items: center; }
input { border: 0; padding: 0; background: none; font: inherit; color: inherit; min-width: 0; outline: 0; }
a { color: inherit; text-decoration: none; }
svg { display: block; flex: none; }
.defs { position: absolute; }
.i8 { width: 8px; height: 8px; }
.i10 { width: 10px; height: 10px; }
.i12 { width: 12px; height: 12px; }
.i14 { width: 14px; height: 14px; }
.i16 { width: 16px; height: 16px; }
.flip { transform: scaleX(-1); }
.grey { color: #8a8a8a; }

/* Outer browser */
.ie { font-family: Roboto, "Open Sans", sans-serif; }
.ie-title { display: flex; justify-content: flex-end; height: 25px; padding: 2px 20px 0 0; gap: 36px; }
.ie-title svg { width: 10px; height: 10px; }
.ie-nav { display: flex; align-items: center; height: 28px; padding: 0 8px 0 1px; }
.round { flex: none; width: 26px; height: 26px; border: 1px solid #aaa; border-radius: 50%; color: #aaa; justify-content: center; margin-right: 3px; }
.round svg { width: 16px; height: 16px; }
.round.big { width: 38px; height: 38px; }
.round.big svg { width: 24px; height: 24px; }
.field { display: flex; align-items: center; height: 24px; border: 1px solid #aaa; color: #777; }
.field input { flex: 1; color: #000; }
.address { flex: 1; gap: 5px; padding: 0 5px 0 3px; }
.address .i8 { margin-right: 2px; }
.find { flex: 0 1 339px; margin-left: 6px; padding: 0 9px 0 7px; gap: 5px; }
.ie-tools { display: flex; gap: 8px; margin-left: 14px; color: #999; }
.ie-tools svg { width: 16px; height: 16px; }
.ie-tabs { display: flex; height: 24px; padding-top: 1px; background: linear-gradient(90deg, transparent 98%, #fff), linear-gradient(#fff, #ececec); }
.ie-tab { width: 200px; background: #fff; border: 1px solid #aaa; border-bottom: 0; padding: 0 5px; gap: 4px; }
.ie-tab span { flex: 1; text-align: left; white-space: nowrap; }
.ie-new { width: 22px; background: #e0e0e0; border: 1px solid #aaa; border-width: 1px 1px 0 0; justify-content: center; }
.ie-new svg { width: 16px; height: 16px; }

/* Browser window shown on the page */
.photo { margin: 9px 230px 8px 8px; font-size: 9px; line-height: 12px; color: #444; }
.ico { width: 13px; height: 13px; }
.ico.wide { height: 10px; }
.tabstrip { display: flex; height: 28px; background: #e8d4fe; padding-left: 8px; }
.tab { flex: 0 1 197px; min-width: 0; gap: 7px; padding: 0 8px 0 9px; }
.tab span { flex: 1; text-align: left; white-space: nowrap; }
.fade span { -webkit-mask-image: linear-gradient(90deg, #000 85%, transparent); mask-image: linear-gradient(90deg, #000 85%, transparent); }
.tab:first-child, .tab:nth-child(4) { background: linear-gradient(#6d5a80, #6d5a80) right center / 1px 16px no-repeat; }
.tab.active { background: #fff; border-radius: 6px 6px 0 0; }
.tab .i10, .plus { color: #222; }
.plus { margin-left: 14px; }
.plus svg { width: 10px; height: 10px; }
.wincontrols { display: flex; gap: 28px; margin-left: auto; padding: 0 14px 4px 0; }
.wincontrols svg { width: 10px; height: 10px; }
.toolbar { display: flex; align-items: center; height: 30px; padding: 0 7px 0 12px; }
.nav { width: 14px; margin-right: 12px; }
.nav:nth-child(3) { margin-right: 11px; color: #222; }
.omnibox { flex: 1; display: flex; align-items: center; height: 24px; border-radius: 12px; background: #e0e0e1; padding: 0 9px; font-size: 11px; margin-right: 12px; }
.scheme { padding: 0 7px; margin-right: 7px; border-right: 1px solid #999; color: #777; font-size: 10px; }
.omnibox input { flex: 1; }
.omni-actions { display: flex; gap: 15px; }
.omni-actions svg, .side svg, .menu svg { width: 12px; height: 12px; }
.avatar { width: 18px; height: 18px; border-radius: 50%; background: #0b929b; color: #fff; justify-content: center; margin: 0 7px 0 11px; }
.menu { width: 22px; height: 22px; border-radius: 50%; background: #e0e0e1; justify-content: center; }
.bookmarks { display: flex; gap: 15px; height: 27px; padding: 0 12px 3px; border-bottom: 1px solid #ccc; }
.bookmarks a { display: flex; align-items: center; gap: 7px; }
.bookmarks b { color: #1a3fe0; font-size: 9px; }

.viewport { display: flex; height: 470px; overflow: hidden; border-bottom: 1px solid #ccc; }
.site { flex: 1; background: #476391; position: relative; }
.container { width: 77%; max-width: 856px; margin: 0 auto; }
.sitenav { background: #f6f7ff; height: 48px; font-weight: 600; color: #3d4a66; }
.sitenav .container { display: flex; align-items: center; height: 48px; gap: 20px; }
.sitenav .on { color: #5054f0; }
.logo { margin-right: auto; }
.logo svg { width: 34px; height: 26px; }
.scrollbar { width: 14px; background: #f1f1f1; display: flex; flex-direction: column; align-items: center; padding: 4px 0; }
.scrollbar svg { width: 8px; height: 8px; }
.scrollbar .thumb { width: 10px; height: 43px; background: #c1c1c1; margin: 50px 0 auto; }
.totop { position: absolute; right: 10px; bottom: 10px; width: 26px; height: 26px; border-radius: 2px; background: #3b4ef8; display: grid; place-items: center; }
.totop svg { width: 12px; height: 12px; }

.dashboard { margin-top: 39px; background: #fff; display: grid; grid-template-columns: 345px 372px 1fr; font-size: 8px; line-height: 10px; color: #555; height: 600px; }
h2 { margin: 0; font-size: 14px; line-height: 18px; font-weight: 300; color: #333; }
.regions { border-right: 1px solid #ccc; height: 500px; margin-top: 5px; padding-left: 1px; }
.regions h2 { padding: 0 0 6px 2px; }
table { width: 100%; table-layout: fixed; border-collapse: separate; border-spacing: 0; }
.c-region { width: 53px; }
.c-state { width: 79px; }
td, th { height: 13px; padding: 0 0 0 3px; text-align: left; white-space: nowrap; }
th { color: #444; font-weight: 600; }
thead .dates { padding: 0; text-align: center; border-left: 1px solid #ccc; }
thead .yr { padding: 0; text-align: center; border-left: 1px solid #ccc; }
thead tr:last-child > * { border-bottom: 1px solid #ccc; }
tbody tr:last-child td { height: 14px; border-bottom: 1px solid #ccc; }
tbody td:nth-child(n+3) { padding-left: 0; border-left: 1px solid #ccc; color: #333; background: linear-gradient(90deg, transparent 42px, #f1f1f1 42px 43px, transparent 43px 85px, #f1f1f1 85px 86px, transparent 86px); }
td i { display: inline-block; height: 10px; vertical-align: bottom; margin-right: 3px; }

.charts { position: relative; padding: 16px 0 0 3px; }
.charts h2 { padding-left: 9px; }
.charts text { font-size: 8px; }
.topn { width: 349px; height: 260px; margin: 6px 0 0 7px; }
.param { position: absolute; left: 277px; top: 313px; width: 117px; color: #333; }
.param input { display: block; width: 117px; height: 14px; margin-top: 2px; padding-left: 3px; border: 1px solid #aaa; background: #fff; }
.charts .second { margin-top: 25px; padding-left: 3px; }
.bottomn { width: 369px; height: 60px; margin-top: 7px; }
.legend { padding: 81px 0 0; }
.legend h3 { display: flex; justify-content: space-between; margin: 0; padding-right: 2px; font-size: 8px; line-height: 10px; font-weight: 600; color: #333; }
.legend h3 svg { width: 8px; height: 8px; }
.legend ul { list-style: none; margin: 2px 0 0; padding: 0 0 0 1px; }
.legend li { display: flex; align-items: center; gap: 3px; height: 13px; }
.legend li:nth-child(5n) { height: 14px; }
.legend i { width: 10px; height: 10px; }

.ap { background: #4e79a7; } .arunachal { background: #a0cbe8; } .assam { background: #f28e2b; }
.bihar { background: #ffbe7d; } .chandigarh { background: #59a14f; } .chhattisgarh { background: #8cd17d; }
.delhi { background: #b6992d; } .dnh { background: #f1ce63; } .goa { background: #499894; }
.gujarat { background: #86bcb6; } .haryana { background: #e15759; } .hp { background: #ff9d9a; }
.jk { background: #79706e; } .jharkhand { background: #bab0ac; } .karnataka { background: #d37295; }
.kerala { background: #fabfd2; } .maharashtra { background: #b07aa1; } .manipur { background: #d4a6c8; }
.meghalaya { background: #9d7660; } .mizoram { background: #d7b5a6; }

.downloads { display: flex; align-items: center; height: 46px; font-size: 10px; }
.dl { flex: 0 1 192px; min-width: 0; height: 36px; border-right: 1px solid #bbb; padding: 0 14px 0 13px; gap: 10px; }
.dl:first-child { flex-basis: 196px; padding-left: 16px; }
.dl svg:first-child { width: 14px; height: 14px; }
.dl span { flex: 1; text-align: left; white-space: nowrap; }
.showall { margin-left: auto; width: 64px; height: 26px; justify-content: center; border: 1px solid #ddd; border-radius: 3px; color: #4a7de8; font-size: 9px; font-weight: 600; }
.dl-close { margin: 0 10px; color: #222; }

/* Taskbars */
.taskbar { display: flex; height: 40px; color: #fff; font-size: 12px; background: linear-gradient(90deg, #3a2d22 0 48px, #4a4a4a 336px 760px, #3e3828 850px, #382b21 1000px); }
.start { width: 48px; justify-content: center; }
.start svg { width: 16px; height: 16px; }
.search { flex: 0 1 288px; min-width: 0; display: flex; align-items: center; background: #f1f1f1; border: 1px solid #bbb; color: #333; font-size: 14px; padding-left: 11px; }
.search input { flex: 1; padding-left: 12px; color: #333; }
.lens { width: 16px; height: 16px; color: #222; }
.art { width: 80px; height: 38px; }
.app { width: 49px; justify-content: center; }
.app svg { width: 24px; height: 24px; }
.app[aria-label="Task view"] svg { width: 17px; height: 17px; }
.open { background: linear-gradient(#f19ad2, #f19ad2) center bottom / 40px 2px no-repeat; }
.current { background: linear-gradient(#f19ad2, #f19ad2) center bottom / 49px 2px no-repeat #625d54; }
.tray { margin-left: auto; display: flex; align-items: center; padding-right: 14px; border-right: 1px solid #888; margin-right: 3px; }
.people { width: 16px; height: 16px; margin-right: 38px; }
.weather { display: flex; align-items: center; gap: 7px; margin-right: 27px; font-size: 13px; }
.weather svg { width: 24px; height: 22px; }
.tri { width: 12px; height: 12px; margin-right: 12px; }
.bat { width: 15px; height: 11px; margin-right: 10px; }
time { margin: 0 17px 0 12px; text-align: center; line-height: 18px; font-size: 11px; }
.notes { position: relative; }
.notes svg { width: 24px; height: 22px; }
.notes b { position: absolute; left: 9px; top: 7px; width: 13px; text-align: center; font-size: 10px; line-height: 15px; }
.small { height: 33px; font-size: 9px; background: linear-gradient(90deg, #3a2d22 0 40px, #302f2c 280px, #363d45 450px, #422922 560px, #3a2d23 650px); }
.small .start { width: 40px; }
.small .start svg { width: 13px; height: 13px; }
.small .search { flex-basis: 237px; font-size: 11px; padding-left: 9px; }
.small .search input { padding-left: 9px; }
.small .lens { width: 14px; height: 14px; }
.small .art { width: 62px; height: 31px; }
.small .app { width: 36px; }
.small .app.wide { width: 40px; }
.small .app.open { width: 37px; }
.small .app svg { width: 19px; height: 19px; }
.small .app[aria-label="Task view"] svg { width: 14px; height: 14px; }
.small .open { background-size: 28px 2px; }
.alert { background: #b3682a; box-shadow: inset 0 -2px #f07a12; }
.small .tray { padding-right: 9px; margin-right: 4px; }
.small .people { width: 12px; height: 12px; margin-right: 34px; }
.small .weather { font-size: 11px; gap: 6px; margin-right: 14px; }
.small .weather svg { width: 18px; height: 18px; }
.small .tri { width: 10px; height: 10px; margin-right: 10px; }
.small .bat { width: 12px; height: 12px; margin-right: 7px; }
.small time { font-size: 9px; line-height: 14px; margin: 0 14px; }
.small .notes svg { width: 20px; height: 18px; }
.small .notes b { left: 7px; top: 5px; width: 12px; font-size: 8px; line-height: 14px; }
```
